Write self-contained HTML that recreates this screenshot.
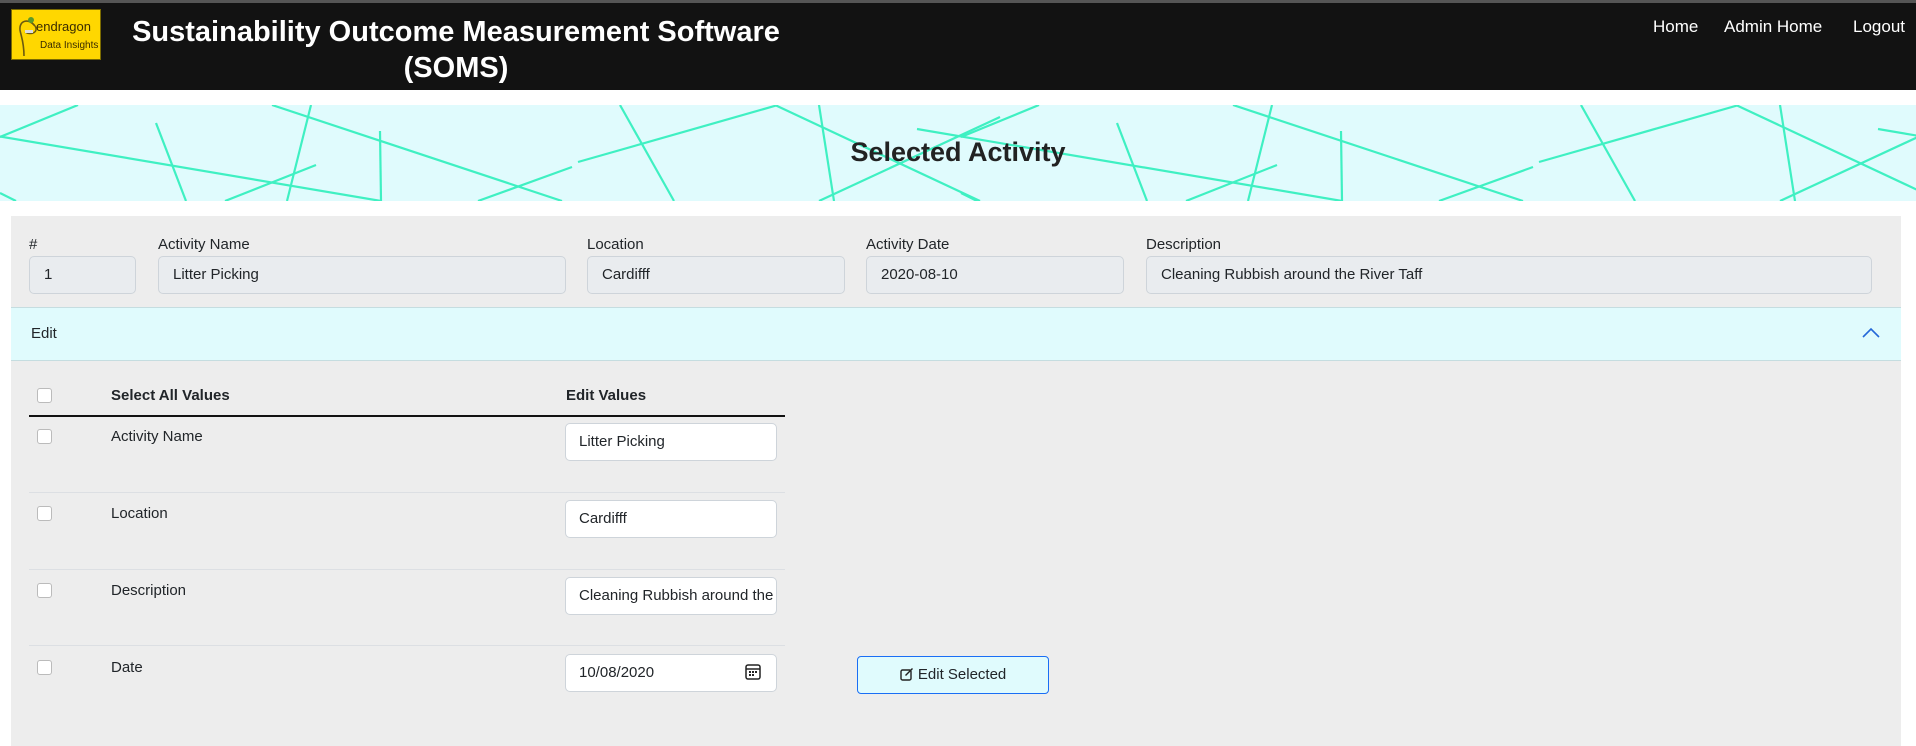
<!DOCTYPE html>
<html><head><meta charset="utf-8"><style>
*{box-sizing:border-box;margin:0;padding:0}
body{width:1916px;height:742px;overflow:hidden;background:#fff;font-family:"Liberation Sans",sans-serif;color:#212529;font-size:15px;position:relative}
.abs{position:absolute}
header{position:absolute;left:0;top:0;width:1916px;height:90px;background:#121212;border-top:3px solid #555}
.logo{left:11px;top:6px;width:90px;height:51px;background:#ffd700;border:1px solid #7a6a00;overflow:hidden}
.title{left:100px;width:712px;top:11px;color:#fff;font-weight:bold;font-size:29px;text-align:center;line-height:36px}
.nav{top:14px;color:#fff;font-size:17px}
.banner{left:0;top:105px;width:1916px;height:96px;background:#e0fbfd}
.panel{left:11px;top:216px;width:1890px;height:530px;background:#ededed}
.lbl{font-size:15px}
.ro{height:38px;background:#e9ecef;border:1px solid #ced4da;border-radius:5px;padding:0 14px;line-height:36px;font-size:15px}
.inp{height:38px;background:#fff;border:1px solid #ced4da;border-radius:5px;padding:0 13px;line-height:36px;font-size:15px;overflow:hidden;white-space:nowrap;width:212px;left:565px}
.cb{width:15px;height:15px;border:1px solid #bbb;border-radius:3px;background:#fff;left:37px}
.sep{left:29px;width:756px;height:1px;background:#dcdfe3}
</style></head><body>
<header>
<div class="abs logo">
<svg class="abs" style="left:3px;top:2px" width="28" height="46"><path d="M20 14 C14 6 4 8 5 18 C6 24 9 30 9 44" stroke="#6b5a10" stroke-width="1.6" fill="none"/><path d="M20 14 C24 20 16 24 10 20" stroke="#6b5a10" stroke-width="1.4" fill="none"/><circle cx="16" cy="8" r="3" fill="#5a9a2a"/><rect x="10" y="18" width="8" height="3" fill="#ddd"/></svg>
<div class="abs" style="left:24px;top:9px;font-size:13px;color:#3a2c00;white-space:nowrap">endragon</div>
<div class="abs" style="left:28px;top:30px;font-size:10px;color:#3a2c00;white-space:nowrap">Data Insights</div>
</div>
<div class="abs title">Sustainability Outcome Measurement Software<br>(SOMS)</div>
<div class="abs nav" style="left:1653px">Home</div>
<div class="abs nav" style="left:1724px">Admin Home</div>
<div class="abs nav" style="left:1853px">Logout</div>
</header>
<div class="abs banner">
<svg width="1916" height="96" style="position:absolute;left:0;top:0" stroke="#3ff0c2" stroke-width="2.2" fill="none">
<g id="t">
<line x1="0" y1="32" x2="78" y2="0"/><line x1="0" y1="88" x2="16" y2="96"/>
<line x1="272" y1="0" x2="562" y2="96"/><line x1="311" y1="0" x2="287" y2="96"/>
<line x1="156" y1="18" x2="186" y2="96"/><line x1="380" y1="26" x2="381" y2="96"/>
<line x1="316" y1="60" x2="225" y2="96"/><line x1="578" y1="57" x2="778" y2="0"/>
<line x1="572" y1="62" x2="478" y2="96"/><line x1="620" y1="0" x2="674" y2="96"/>
<line x1="775" y1="0" x2="980" y2="96"/><line x1="819" y1="0" x2="834" y2="96"/>
<line x1="1000" y1="12" x2="819" y2="96"/><line x1="917" y1="24" x2="1342" y2="96"/>
</g>
<use href="#t" x="961"/>
<line x1="-44" y1="24" x2="381" y2="96"/>
</svg>
<div class="abs" style="left:0;width:1916px;top:32px;text-align:center;font-size:27px;font-weight:bold;color:#222">Selected Activity</div>
</div>
<div class="abs panel"></div>
<div class="abs lbl" style="left:29px;top:236px">#</div>
<div class="abs lbl" style="left:158px;top:236px">Activity Name</div>
<div class="abs lbl" style="left:587px;top:236px">Location</div>
<div class="abs lbl" style="left:866px;top:236px">Activity Date</div>
<div class="abs lbl" style="left:1146px;top:236px">Description</div>
<div class="abs ro" style="left:29px;top:256px;width:107px">1</div>
<div class="abs ro" style="left:158px;top:256px;width:408px">Litter Picking</div>
<div class="abs ro" style="left:587px;top:256px;width:258px">Cardifff</div>
<div class="abs ro" style="left:866px;top:256px;width:258px">2020-08-10</div>
<div class="abs ro" style="left:1146px;top:256px;width:726px">Cleaning Rubbish around the River Taff</div>
<div class="abs" style="left:11px;top:307px;width:1890px;height:54px;background:#e0fbfd;border-top:1px solid #c5dde0;border-bottom:1px solid #c5dde0"></div>
<div class="abs" style="left:31px;top:325px">Edit</div>
<svg class="abs" style="left:1862px;top:327px" width="18" height="12"><path d="M1 10 L9 2 L17 10" stroke="#2468d8" stroke-width="1.6" fill="none"/></svg>
<div class="abs cb" style="top:388px"></div>
<div class="abs" style="left:111px;top:387px;font-weight:bold">Select All Values</div>
<div class="abs" style="left:566px;top:387px;font-weight:bold">Edit Values</div>
<div class="abs" style="left:29px;top:415px;width:756px;height:2px;background:#111"></div>
<div class="abs cb" style="top:429px"></div><div class="abs" style="left:111px;top:428px">Activity Name</div>
<div class="abs inp" style="top:423px">Litter Picking</div>
<div class="abs sep" style="top:492px"></div>
<div class="abs cb" style="top:506px"></div><div class="abs" style="left:111px;top:505px">Location</div>
<div class="abs inp" style="top:500px">Cardifff</div>
<div class="abs sep" style="top:569px"></div>
<div class="abs cb" style="top:583px"></div><div class="abs" style="left:111px;top:582px">Description</div>
<div class="abs inp" style="top:577px">Cleaning Rubbish around the River Taff</div>
<div class="abs sep" style="top:645px"></div>
<div class="abs cb" style="top:660px"></div><div class="abs" style="left:111px;top:659px">Date</div>
<div class="abs inp" style="top:654px">10/08/2020</div>
<svg class="abs" style="left:745px;top:664px" width="16" height="16"><rect x="1" y="1" width="14" height="14" rx="2" stroke="#222" stroke-width="1.5" fill="none"/><line x1="1" y1="5" x2="15" y2="5" stroke="#222" stroke-width="1.5"/><g fill="#222"><rect x="4" y="7" width="2" height="2"/><rect x="7" y="7" width="2" height="2"/><rect x="10" y="7" width="2" height="2"/><rect x="4" y="10" width="2" height="2"/><rect x="7" y="10" width="2" height="2"/></g></svg>
<div class="abs" style="left:857px;top:656px;width:192px;height:38px;background:#e0fbfd;border:1px solid #1a6ef5;border-radius:4px;text-align:center;line-height:36px;font-size:15px">
<svg width="14" height="14" style="vertical-align:-2px"><rect x="1" y="3" width="10" height="10" rx="1.5" stroke="#222" stroke-width="1.4" fill="none"/><path d="M6 9 L13 2 L12 1 L5 8 Z" fill="#222"/></svg> Edit Selected</div>
</body></html>
